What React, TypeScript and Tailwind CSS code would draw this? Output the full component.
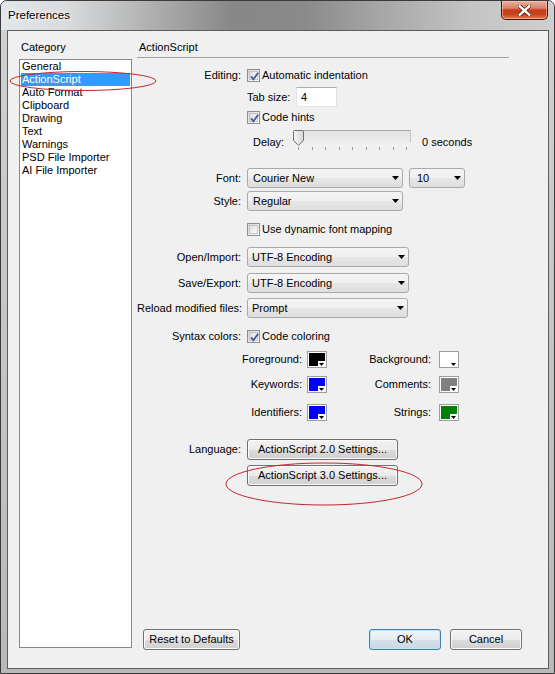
import React from "react";

const Checkbox = ({ checked }: { checked?: boolean }) => (
  <span className="relative flex h-[13px] w-[13px] shrink-0 items-center justify-center border border-[#8e8f8f] bg-[linear-gradient(135deg,#d6d6d6,#ffffff)]">
    <span className="h-[9px] w-[9px] border border-[#c4c4c4] bg-[linear-gradient(135deg,#dedede,#fbfbfb)]" />
    {checked && (
      <svg className="absolute left-[1px] top-[1px]" width="11" height="11" viewBox="0 0 11 11">
        <path d="M2 5.3 L4.4 8.2 L9.2 1.8" fill="none" stroke="#4a5f97" strokeWidth="1.9" />
      </svg>
    )}
  </span>
);

const Arrow = () => (
  <svg width="7" height="4" viewBox="0 0 7 4" className="shrink-0">
    <path d="M0 0 H7 L3.5 4 Z" fill="#000" />
  </svg>
);

const Select = ({ value, cls }: { value: string; cls: string }) => (
  <div
    className={`flex h-[20px] shrink-0 items-center justify-between rounded-[3px] border border-[#a9a9a9] bg-[linear-gradient(#f5f5f5_0%,#efefef_50%,#e6e6e6_51%,#dedede_100%)] pr-[3px] ${cls}`}
  >
    <span className="whitespace-nowrap">{value}</span>
    <Arrow />
  </div>
);

const Button = ({ children, cls }: { children: React.ReactNode; cls: string }) => (
  <div
    className={`flex shrink-0 items-center justify-center whitespace-nowrap rounded-[3px] border border-[#707070] bg-[linear-gradient(#f2f2f2_0%,#ebebeb_50%,#dddddd_51%,#cfcfcf_100%)] shadow-[inset_0_0_0_1px_#fcfcfc] ${cls}`}
  >
    {children}
  </div>
);

const Swatch = ({ cls }: { cls: string }) => (
  <div className="relative h-[17px] w-[20px] shrink-0 border border-[#9d9d9d] bg-white p-[1px]">
    <div className={`h-full w-full ${cls}`} />
    <div className="absolute bottom-[1px] right-[1px] flex h-[5px] w-[7px] items-end justify-center bg-white">
      <svg width="5" height="3" viewBox="0 0 5 3">
        <path d="M0 0 H5 L2.5 3 Z" fill="#000" />
      </svg>
    </div>
  </div>
);

const Label = ({ children }: { children: React.ReactNode }) => (
  <div className="w-[104px] shrink-0 whitespace-nowrap text-right">{children}</div>
);

const categories = [
  "General",
  "ActionScript",
  "Auto Format",
  "Clipboard",
  "Drawing",
  "Text",
  "Warnings",
  "PSD File Importer",
  "AI File Importer",
];

export default function App() {
  return (
    <div className="relative flex h-[674px] w-[555px] flex-col overflow-hidden rounded-t-[7px] border border-[#3a3a3a] bg-[linear-gradient(#cfd1d3,#b9b9b9)] font-['Liberation_Sans',Arial,sans-serif] text-[11px] leading-[13px] text-black">
      {/* Title bar */}
      <div className="flex h-[29px] shrink-0 items-start justify-between bg-[linear-gradient(90deg,#e4e7ea_0%,#d8dadc_12%,#adadad_28%,#878787_42%,#8a8a8a_55%,#a9a9a9_70%,#c4c4c4_85%,#cfcfcf_100%)] pl-[7px] pr-[6px]">
        <div className="mt-[8px] text-[11.5px] [text-shadow:0_0_6px_#ffffff,0_0_3px_#ffffff]">Preferences</div>
        <div className="flex h-[19px] w-[47px] items-center justify-center rounded-b-[5px] border border-t-0 border-[#4a140b] bg-[linear-gradient(#eab0a2_0%,#dc8068_40%,#c63b1e_50%,#c9421f_75%,#e3804d_100%)] shadow-[inset_0_0_0_1px_rgba(255,210,190,0.55)]">
          <svg width="13" height="11" viewBox="0 0 13 11">
            <path
              d="M1.5 1 L11.5 10 M11.5 1 L1.5 10"
              stroke="#5a2010"
              strokeWidth="4"
              strokeLinecap="round"
              fill="none"
            />
            <path
              d="M1.8 1.3 L11.2 9.7 M11.2 1.3 L1.8 9.7"
              stroke="#ffffff"
              strokeWidth="2.4"
              strokeLinecap="square"
              fill="none"
            />
          </svg>
        </div>
      </div>

      {/* Client area */}
      <div className="mb-[4px] ml-[6px] mr-[5px] flex flex-1 border border-[#5c5c5c] bg-[#f0f0f0]">
        {/* Left column */}
        <div className="flex w-[124px] shrink-0 flex-col">
          <div className="ml-[13px] mt-[8px] h-[16px] leading-[16px]">Category</div>
          <div className="mb-[20px] ml-[11px] mt-[4px] flex w-[113px] flex-1 flex-col border border-[#828790] bg-white">
            {categories.map((c) =>
              c === "ActionScript" ? (
                <div key={c} className="mx-[1px] h-[13px] whitespace-nowrap bg-[#3399ff] pl-[1px] text-white">
                  {c}
                </div>
              ) : (
                <div key={c} className="mx-[1px] h-[13px] whitespace-nowrap pl-[1px]">
                  {c}
                </div>
              )
            )}
          </div>
        </div>

        {/* Right column */}
        <div className="ml-[5px] flex flex-1 flex-col">
          <div className="mt-[8px] h-[16px] pl-[2px] leading-[16px]">ActionScript</div>
          <div className="mt-[2px] h-px w-[372px] bg-[#a0a0a0]" />

          {/* Editing */}
          <div className="mt-[7px] flex h-[20px] items-center">
            <Label>Editing:</Label>
            <div className="ml-[6px] flex items-center gap-[2px]">
              <Checkbox checked />
              <span>Automatic indentation</span>
            </div>
          </div>

          {/* Tab size */}
          <div className="mt-[2px] flex h-[20px] items-center">
            <div className="w-[104px] shrink-0" />
            <div className="ml-[6px] flex items-center">
              <span className="w-[49px] shrink-0">Tab size:</span>
              <div className="flex h-[20px] w-[41px] items-center border border-[#abadb3] border-b-[#e3e9ef] border-l-[#e2e3ea] border-r-[#dbdfe6] bg-white pl-[4px]">
                4
              </div>
            </div>
          </div>

          {/* Code hints */}
          <div className="flex h-[20px] items-center">
            <div className="w-[104px] shrink-0" />
            <div className="ml-[6px] flex items-center gap-[2px]">
              <Checkbox checked />
              <span>Code hints</span>
            </div>
          </div>

          {/* Delay */}
          <div className="mt-[1px] flex h-[24px] items-center">
            <div className="w-[104px] shrink-0" />
            <div className="ml-[6px] flex items-center">
              <span className="mt-[4px] w-[46px] shrink-0 pl-[6px]">Delay:</span>
              <div className="relative h-[24px] w-[118px] shrink-0">
                <div className="absolute left-[5px] top-[2px] h-[13px] w-[113px] border border-[#c4c4c4] border-b-[#ececec] border-t-[#a9a9a9] bg-[linear-gradient(#e2e2e2,#ededed)]" />
                <svg className="absolute left-0 top-[2px]" width="11" height="16" viewBox="0 0 11 16">
                  <defs>
                    <linearGradient id="th" x1="0" x2="1" y1="0" y2="0">
                      <stop offset="0" stopColor="#f4f4f4" />
                      <stop offset="1" stopColor="#d6d6d6" />
                    </linearGradient>
                  </defs>
                  <path
                    d="M1.5 0.5 H9.5 Q10.5 0.5 10.5 1.5 V10.5 L5.5 15.3 L0.5 10.5 V1.5 Q0.5 0.5 1.5 0.5 Z"
                    fill="url(#th)"
                    stroke="#6f6f6f"
                  />
                </svg>
                <div className="absolute left-[5px] top-[19px] flex w-[109px] justify-between">
                  {Array.from({ length: 9 }).map((_, i) => (
                    <div key={i} className="h-[3px] w-px bg-[#9a9a9a]" />
                  ))}
                </div>
              </div>
              <span className="ml-[11px] mt-[4px] whitespace-nowrap">0 seconds</span>
            </div>
          </div>

          {/* Font */}
          <div className="mt-[16px] flex h-[20px] items-center">
            <Label>Font:</Label>
            <div className="ml-[6px] flex items-center">
              <Select value="Courier New" cls="w-[156px] pl-[5px]" />
              <Select value="10" cls="ml-[6px] w-[56px] pl-[7px]" />
            </div>
          </div>

          {/* Style */}
          <div className="mt-[3px] flex h-[20px] items-center">
            <Label>Style:</Label>
            <div className="ml-[6px] flex items-center">
              <Select value="Regular" cls="w-[156px] pl-[5px]" />
            </div>
          </div>

          {/* Dynamic font mapping */}
          <div className="mt-[8px] flex h-[21px] items-center">
            <div className="w-[104px] shrink-0" />
            <div className="ml-[6px] flex items-center gap-[2px]">
              <Checkbox />
              <span>Use dynamic font mapping</span>
            </div>
          </div>

          {/* Open/Import */}
          <div className="mt-[7px] flex h-[20px] items-center">
            <Label>Open/Import:</Label>
            <div className="ml-[6px] flex items-center">
              <Select value="UTF-8 Encoding" cls="w-[162px] pl-[4px]" />
            </div>
          </div>

          {/* Save/Export */}
          <div className="mt-[6px] flex h-[20px] items-center">
            <Label>Save/Export:</Label>
            <div className="ml-[6px] flex items-center">
              <Select value="UTF-8 Encoding" cls="w-[162px] pl-[4px]" />
            </div>
          </div>

          {/* Reload */}
          <div className="mt-[5px] flex h-[20px] items-center">
            <Label>Reload modified files:</Label>
            <div className="ml-[6px] flex items-center">
              <Select value="Prompt" cls="w-[161px] pl-[4px]" />
            </div>
          </div>

          {/* Syntax colors */}
          <div className="mt-[8px] flex h-[20px] items-center">
            <Label>Syntax colors:</Label>
            <div className="ml-[6px] flex items-center gap-[2px]">
              <Checkbox checked />
              <span>Code coloring</span>
            </div>
          </div>

          {/* Foreground / Background */}
          <div className="mt-[3px] flex h-[20px] items-center">
            <div className="w-[165px] shrink-0 whitespace-nowrap text-right">Foreground:</div>
            <div className="ml-[5px]">
              <Swatch cls="bg-black" />
            </div>
            <div className="w-[104px] shrink-0 whitespace-nowrap text-right">Background:</div>
            <div className="ml-[8px]">
              <Swatch cls="bg-white" />
            </div>
          </div>

          {/* Keywords / Comments */}
          <div className="mt-[5px] flex h-[20px] items-center">
            <div className="w-[165px] shrink-0 whitespace-nowrap text-right">Keywords:</div>
            <div className="ml-[5px]">
              <Swatch cls="bg-[#0000ff]" />
            </div>
            <div className="w-[104px] shrink-0 whitespace-nowrap text-right">Comments:</div>
            <div className="ml-[8px]">
              <Swatch cls="bg-[#808080]" />
            </div>
          </div>

          {/* Identifiers / Strings */}
          <div className="mt-[8px] flex h-[20px] items-center">
            <div className="w-[165px] shrink-0 whitespace-nowrap text-right">Identifiers:</div>
            <div className="ml-[5px]">
              <Swatch cls="bg-[#0000ff]" />
            </div>
            <div className="w-[104px] shrink-0 whitespace-nowrap text-right">Strings:</div>
            <div className="ml-[8px]">
              <Swatch cls="bg-[#008000]" />
            </div>
          </div>

          {/* Language */}
          <div className="mt-[17px] flex h-[21px] items-center">
            <Label>Language:</Label>
            <div className="ml-[6px] flex items-center">
              <Button cls="h-[21px] w-[151px]">ActionScript 2.0 Settings...</Button>
            </div>
          </div>
          <div className="mt-[5px] flex h-[21px] items-center">
            <div className="w-[104px] shrink-0" />
            <div className="ml-[6px] flex items-center">
              <Button cls="h-[21px] w-[151px]">ActionScript 3.0 Settings...</Button>
            </div>
          </div>

          {/* Bottom buttons */}
          <div className="mb-[18px] mt-auto flex items-center pr-[26px]">
            <Button cls="ml-[6px] h-[21px] w-[97px]">Reset to Defaults</Button>
            <div className="ml-auto flex items-center gap-[9px]">
              <div className="flex h-[21px] w-[72px] items-center justify-center rounded-[3px] border border-[#3c7fb1] bg-[linear-gradient(#f0f4f7_0%,#e6edf2_50%,#d6e0e8_51%,#cbd7e1_100%)] shadow-[inset_0_0_0_1px_#bfe3f7]">
                OK
              </div>
              <Button cls="h-[21px] w-[72px]">Cancel</Button>
            </div>
          </div>
        </div>
      </div>

      {/* Red annotation ellipses */}
      <svg className="pointer-events-none absolute left-[-1px] top-[-1px]" width="555" height="674" viewBox="0 0 555 674">
        <ellipse cx="83" cy="81" rx="73" ry="9.5" fill="none" stroke="#c0272d" strokeWidth="1" />
        <ellipse cx="324" cy="484" rx="98" ry="21" fill="none" stroke="#c0272d" strokeWidth="1" />
      </svg>
    </div>
  );
}
